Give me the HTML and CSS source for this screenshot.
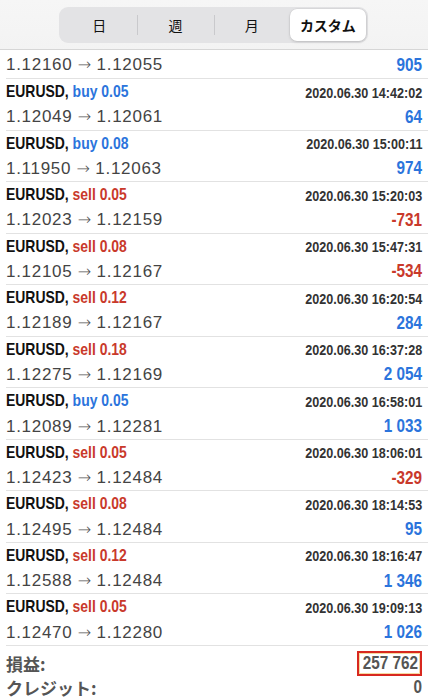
FILE: index.html
```html
<!DOCTYPE html>
<html lang="ja">
<head>
<meta charset="utf-8">
<link rel="stylesheet" href="styles.css">
</head>
<body>
<header class="top">
  <div class="seg">
    <div class="seg-item">日</div>
    <div class="seg-item div">週</div>
    <div class="seg-item div">月</div>
    <div class="seg-item active">カスタム</div>
  </div>
</header>
<main class="list">
  <div class="row partial">
    <div class="line"><span class="price">1.12160 <span class="arr">→</span> 1.12055</span><span class="val blue">905</span></div>
  </div>
  <div class="row">
    <div class="line l1"><span class="sym">EURUSD, <span class="blue">buy 0.05</span></span><span class="time">2020.06.30 14:42:02</span></div>
    <div class="line l2"><span class="price">1.12049 <span class="arr">→</span> 1.12061</span><span class="val blue">64</span></div>
  </div>
  <div class="row">
    <div class="line l1"><span class="sym">EURUSD, <span class="blue">buy 0.08</span></span><span class="time">2020.06.30 15:00:11</span></div>
    <div class="line l2"><span class="price">1.11950 <span class="arr">→</span> 1.12063</span><span class="val blue">974</span></div>
  </div>
  <div class="row">
    <div class="line l1"><span class="sym">EURUSD, <span class="red">sell 0.05</span></span><span class="time">2020.06.30 15:20:03</span></div>
    <div class="line l2"><span class="price">1.12023 <span class="arr">→</span> 1.12159</span><span class="val red">-731</span></div>
  </div>
  <div class="row">
    <div class="line l1"><span class="sym">EURUSD, <span class="red">sell 0.08</span></span><span class="time">2020.06.30 15:47:31</span></div>
    <div class="line l2"><span class="price">1.12105 <span class="arr">→</span> 1.12167</span><span class="val red">-534</span></div>
  </div>
  <div class="row">
    <div class="line l1"><span class="sym">EURUSD, <span class="red">sell 0.12</span></span><span class="time">2020.06.30 16:20:54</span></div>
    <div class="line l2"><span class="price">1.12189 <span class="arr">→</span> 1.12167</span><span class="val blue">284</span></div>
  </div>
  <div class="row">
    <div class="line l1"><span class="sym">EURUSD, <span class="red">sell 0.18</span></span><span class="time">2020.06.30 16:37:28</span></div>
    <div class="line l2"><span class="price">1.12275 <span class="arr">→</span> 1.12169</span><span class="val blue">2 054</span></div>
  </div>
  <div class="row">
    <div class="line l1"><span class="sym">EURUSD, <span class="blue">buy 0.05</span></span><span class="time">2020.06.30 16:58:01</span></div>
    <div class="line l2"><span class="price">1.12089 <span class="arr">→</span> 1.12281</span><span class="val blue">1 033</span></div>
  </div>
  <div class="row">
    <div class="line l1"><span class="sym">EURUSD, <span class="red">sell 0.05</span></span><span class="time">2020.06.30 18:06:01</span></div>
    <div class="line l2"><span class="price">1.12423 <span class="arr">→</span> 1.12484</span><span class="val red">-329</span></div>
  </div>
  <div class="row">
    <div class="line l1"><span class="sym">EURUSD, <span class="red">sell 0.08</span></span><span class="time">2020.06.30 18:14:53</span></div>
    <div class="line l2"><span class="price">1.12495 <span class="arr">→</span> 1.12484</span><span class="val blue">95</span></div>
  </div>
  <div class="row">
    <div class="line l1"><span class="sym">EURUSD, <span class="red">sell 0.12</span></span><span class="time">2020.06.30 18:16:47</span></div>
    <div class="line l2"><span class="price">1.12588 <span class="arr">→</span> 1.12484</span><span class="val blue">1 346</span></div>
  </div>
  <div class="row">
    <div class="line l1"><span class="sym">EURUSD, <span class="red">sell 0.05</span></span><span class="time">2020.06.30 19:09:13</span></div>
    <div class="line l2"><span class="price">1.12470 <span class="arr">→</span> 1.12280</span><span class="val blue">1 026</span></div>
  </div>
  <div class="summary">
    <div class="sline"><span class="slabel">損益:</span><span class="boxed"><span class="sval">257 762</span></span></div>
    <div class="sline"><span class="slabel">クレジット:</span><span class="sval">0</span></div>
  </div>
</main>
</body>
</html>
```
FILE: styles.css
```css
html, body {
  margin: 0;
  padding: 0;
  background: #ffffff;
}
body {
  width: 428px;
  height: 700px;
  overflow: hidden;
  font-family: "Liberation Sans", Arial, "Noto Sans CJK JP", sans-serif;
}
.top {
  height: 50px;
  box-sizing: border-box;
  background: linear-gradient(#f6f6f6, #f3f3f3);
  border-bottom: 1px solid #d6d6d6;
  padding-top: 7px;
  padding-left: 59px;
}
.seg {
  width: 309px;
  height: 36px;
  box-sizing: border-box;
  background: #e3e3e5;
  border-radius: 9px;
  display: flex;
  align-items: center;
  padding: 2px;
}
.seg-item {
  flex: 1;
  height: 32px;
  display: flex;
  align-items: center;
  justify-content: center;
  font-family: "Noto Sans CJK JP", sans-serif;
  font-size: 14px;
  color: #111;
  position: relative;
}
.seg-item.div::before {
  content: "";
  position: absolute;
  left: 0;
  top: 6px;
  height: 20px;
  width: 1px;
  background: #c9c9cc;
}
.seg-item.active {
  background: #ffffff;
  border-radius: 7px;
  box-shadow: 0 1px 3px rgba(0,0,0,0.15), 0 0 0 0.5px rgba(0,0,0,0.06);
  font-weight: 700;
}
.list {
  display: flex;
  flex-direction: column;
}
.row {
  margin-left: 6px;
  padding-right: 6px;
  height: 51.55px;
  box-sizing: border-box;
  border-bottom: 1px solid #e2e2e2;
}
.row.partial {
  height: 29px;
  padding-top: 2px;
  display: flex;
  align-items: center;
}
.row.partial .line {
  width: 100%;
}
.line {
  display: flex;
  justify-content: space-between;
  align-items: center;
}
.l1 { height: 26px; }
.l2 { height: 24.5px; }
.sym {
  display: inline-block;
  font-weight: 700;
  font-size: 17px;
  color: #111;
  transform: scaleX(0.82);
  transform-origin: left center;
  white-space: nowrap;
}
.time {
  display: inline-block;
  font-weight: 700;
  font-size: 15px;
  color: #333;
  transform: scaleX(0.84);
  transform-origin: right center;
  white-space: nowrap;
}
.price {
  font-size: 17px;
  letter-spacing: 0.7px;
  color: #444;
}
.arr {
  font-family: "DejaVu Sans", sans-serif;
  font-weight: 200;
  font-size: 16px;
  color: #555;
  letter-spacing: 0;
}
.val {
  display: inline-block;
  font-weight: 700;
  font-size: 18px;
  transform: scaleX(0.85);
  transform-origin: right center;
  white-space: nowrap;
}
.blue { color: #2b74dc; }
.red { color: #c9392b; }
.summary {
  padding: 5px 6px 0 6px;
}
.sline {
  height: 24px;
  display: flex;
  justify-content: space-between;
  align-items: center;
}
.slabel {
  font-family: "Noto Sans CJK JP", sans-serif;
  font-size: 17px;
  font-weight: 700;
  color: #555;
}
.sval {
  display: inline-block;
  font-weight: 700;
  font-size: 18px;
  color: #555;
  transform: scaleX(0.85);
  transform-origin: right center;
  white-space: nowrap;
}
.boxed {
  display: inline-flex;
  justify-content: flex-end;
  align-items: center;
  width: 57px;
  height: 21px;
  border: 2px solid #d8281f;
  box-shadow: inset 0 0 0 1px #f6d9a0;
  padding: 0 2px;
  overflow: hidden;
}
```
